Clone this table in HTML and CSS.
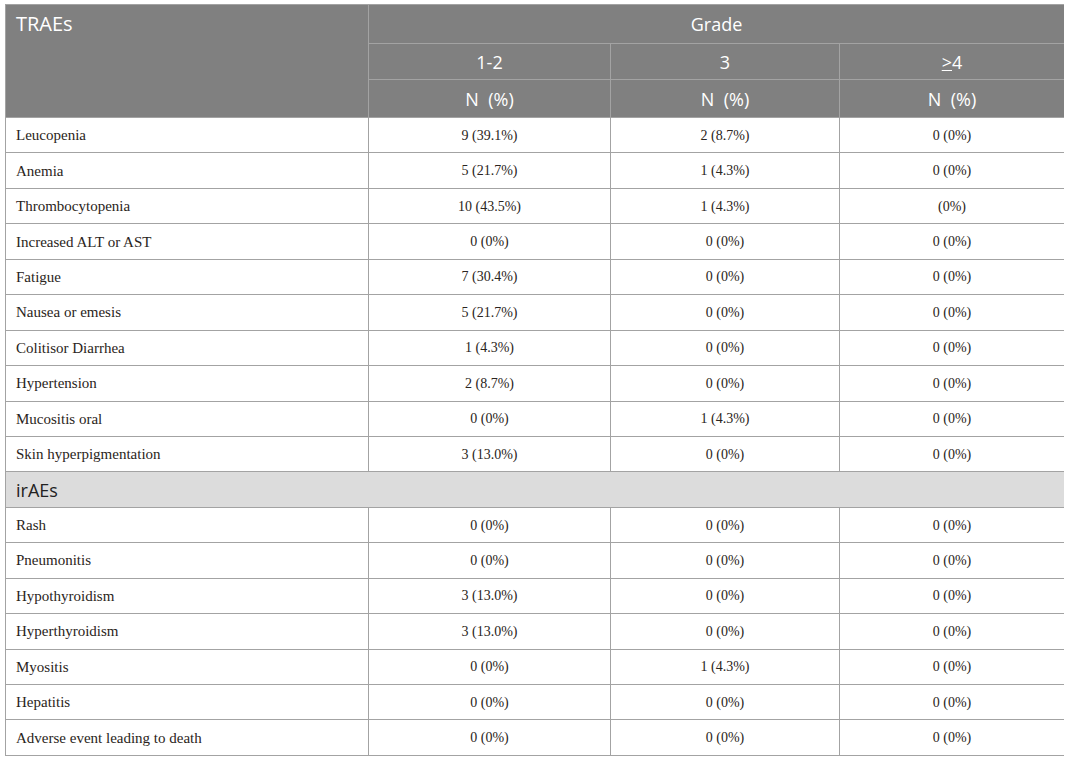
FILE: index.html
```html
<!DOCTYPE html>
<html lang="en">
<head>
<meta charset="utf-8">
<title>TRAEs and irAEs</title>
<link rel="stylesheet" href="styles.css">
</head>
<body>
<table class="ae-table">
  <colgroup>
    <col class="c-name">
    <col class="c-g12">
    <col class="c-g3">
    <col class="c-g4">
  </colgroup>
  <thead>
    <tr class="h1">
      <th rowspan="3" class="th-name">TRAEs</th>
      <th colspan="3">Grade</th>
    </tr>
    <tr class="h2">
      <th>1-2</th>
      <th>3</th>
      <th><u>&gt;</u>4</th>
    </tr>
    <tr class="h3">
      <th>N&nbsp;&nbsp;(%)</th>
      <th>N&nbsp;&nbsp;(%)</th>
      <th>N&nbsp;&nbsp;(%)</th>
    </tr>
  </thead>
  <tbody>
    <tr><td>Leucopenia</td><td>9 (39.1%)</td><td>2 (8.7%)</td><td>0 (0%)</td></tr>
    <tr><td>Anemia</td><td>5 (21.7%)</td><td>1 (4.3%)</td><td>0 (0%)</td></tr>
    <tr><td>Thrombocytopenia</td><td>10 (43.5%)</td><td>1 (4.3%)</td><td>(0%)</td></tr>
    <tr><td>Increased ALT or AST</td><td>0 (0%)</td><td>0 (0%)</td><td>0 (0%)</td></tr>
    <tr><td>Fatigue</td><td>7 (30.4%)</td><td>0 (0%)</td><td>0 (0%)</td></tr>
    <tr><td>Nausea or emesis</td><td>5 (21.7%)</td><td>0 (0%)</td><td>0 (0%)</td></tr>
    <tr><td>Colitisor Diarrhea</td><td>1 (4.3%)</td><td>0 (0%)</td><td>0 (0%)</td></tr>
    <tr><td>Hypertension</td><td>2 (8.7%)</td><td>0 (0%)</td><td>0 (0%)</td></tr>
    <tr><td>Mucositis oral</td><td>0 (0%)</td><td>1 (4.3%)</td><td>0 (0%)</td></tr>
    <tr><td>Skin hyperpigmentation</td><td>3 (13.0%)</td><td>0 (0%)</td><td>0 (0%)</td></tr>
    <tr class="section"><td colspan="4">irAEs</td></tr>
    <tr><td>Rash</td><td>0 (0%)</td><td>0 (0%)</td><td>0 (0%)</td></tr>
    <tr><td>Pneumonitis</td><td>0 (0%)</td><td>0 (0%)</td><td>0 (0%)</td></tr>
    <tr><td>Hypothyroidism</td><td>3 (13.0%)</td><td>0 (0%)</td><td>0 (0%)</td></tr>
    <tr><td>Hyperthyroidism</td><td>3 (13.0%)</td><td>0 (0%)</td><td>0 (0%)</td></tr>
    <tr><td>Myositis</td><td>0 (0%)</td><td>1 (4.3%)</td><td>0 (0%)</td></tr>
    <tr><td>Hepatitis</td><td>0 (0%)</td><td>0 (0%)</td><td>0 (0%)</td></tr>
    <tr><td>Adverse event leading to death</td><td>0 (0%)</td><td>0 (0%)</td><td>0 (0%)</td></tr>
  </tbody>
</table>
</body>
</html>
```

FILE: styles.css
```css
html, body {
  background: #ffffff;
}
body {
  margin: 4px 5px;
}
.ae-table {
  width: 1059px;
  table-layout: fixed;
  border-collapse: collapse;
  font-family: "Liberation Serif", "Times New Roman", serif;
  font-size: 14px;
  color: #2a2420;
}
.c-name { width: 363px; }
.c-g12 { width: 242px; }
.c-g3 { width: 229px; }
.c-g4 { width: 225px; }

.ae-table th,
.ae-table td {
  border: 1px solid #a3a3a3;
  padding: 0;
}
.ae-table th {
  background: #808080;
  color: #ffffff;
  font-family: "Open Sans", "Noto Sans", sans-serif;
  font-weight: 400;
  font-size: 18px;
  text-align: center;
  vertical-align: middle;
}
.ae-table th.th-name {
  text-align: left;
  vertical-align: top;
  padding: 5px 10px 0;
  font-size: 20px;
}
.h1 { height: 39px; }
.h2 { height: 36px; }
.h3 { height: 38px; }

.ae-table tbody tr { height: 35.44px; }
.ae-table td {
  text-align: center;
  vertical-align: middle;
  padding-top: 1px;
}
.ae-table td:first-child {
  text-align: left;
  padding-left: 10px;
  font-size: 15px;
}
.ae-table tr.section td {
  background: #dcdcdc;
  font-family: "Open Sans", "Noto Sans", sans-serif;
  font-size: 18px;
  color: #222222;
  padding-top: 0;
}
```
